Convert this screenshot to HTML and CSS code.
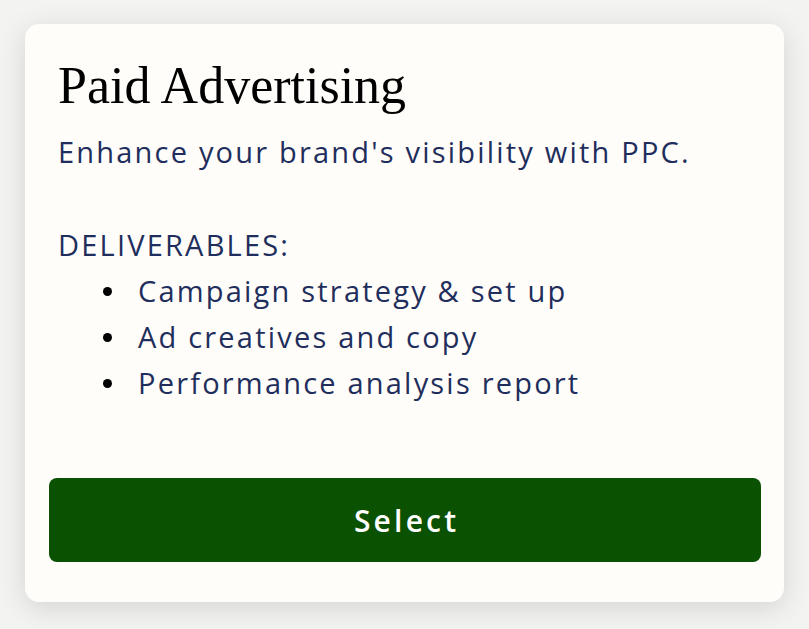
FILE: index.html
```html
<!DOCTYPE html>
<html lang="en">
<head>
<meta charset="utf-8">
<title>Paid Advertising</title>
<link rel="stylesheet" href="styles.css">
</head>
<body>
<div class="card">
  <div class="content">
    <h2 class="title">Paid Advertising</h2>
    <p class="desc">Enhance your brand's visibility with PPC.</p>
    <p class="label">DELIVERABLES:</p>
    <ul class="list">
      <li>Campaign strategy &amp; set up</li>
      <li>Ad creatives and copy</li>
      <li>Performance analysis report</li>
    </ul>
  </div>
  <button class="select" type="button">Select</button>
</div>
</body>
</html>
```
FILE: styles.css
```css
html, body {
  margin: 0;
  height: 100%;
}
body {
  background: #f3f3f1;
  padding: 24px 25px 27px 25px;
  box-sizing: border-box;
  font-family: "Open Sans", "Noto Sans", sans-serif;
}
.card {
  width: 759px;
  height: 578px;
  box-sizing: border-box;
  background: #fefdf9;
  border-radius: 14px;
  box-shadow: 0 6px 28px rgba(0, 0, 0, 0.13);
  padding: 24px 23px 40px 24px;
  display: flex;
  flex-direction: column;
}
.content {
  padding: 0 9px;
}
.title {
  font-family: "Liberation Serif", "Times New Roman", serif;
  font-weight: 400;
  font-size: 52px;
  line-height: 60px;
  margin: 8px 0 13px;
  color: #000;
}
.desc, .label, .list {
  color: #1f2e5c;
  font-size: 29px;
  line-height: 46px;
  letter-spacing: 2.2px;
  margin: 0;
}
.desc {
  margin-bottom: 47px;
}
.list {
  list-style: none;
  padding-left: 45px;
}
.list li {
  display: flex;
  align-items: center;
}
.list li::before {
  content: "";
  flex: none;
  width: 9px;
  height: 9px;
  border-radius: 50%;
  background: #000;
  margin-right: 26px;
}
.select {
  margin-top: auto;
  height: 84px;
  width: 100%;
  border: none;
  border-radius: 8px;
  background: #0b5102;
  color: #fff;
  font-family: "Open Sans", "Noto Sans", sans-serif;
  font-weight: 600;
  font-size: 30px;
  letter-spacing: 3.2px;
  padding: 0 0 0 3.2px;
}
```
